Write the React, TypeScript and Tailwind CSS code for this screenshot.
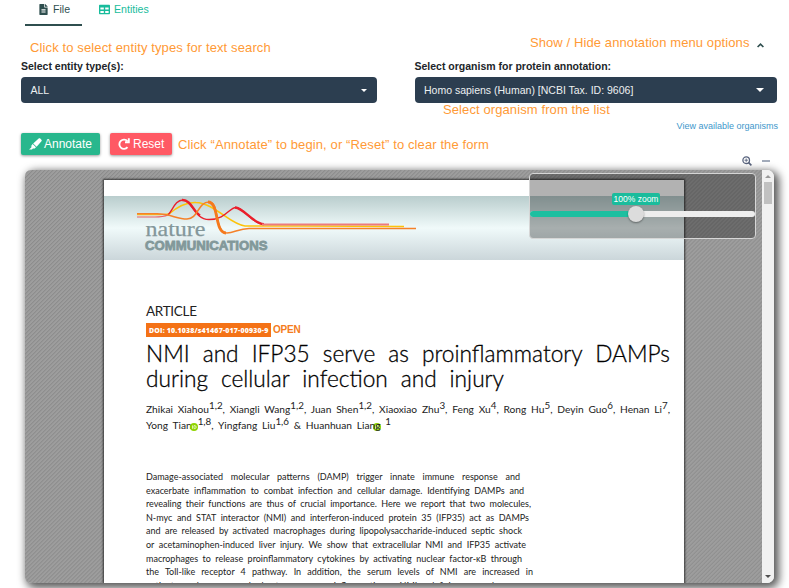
import React from 'react';

type Line = { text: string; width: number };

const abstractLines: Line[] = [
  { text: 'Damage-associated molecular patterns (DAMP) trigger innate immune response and', width: 374 },
  { text: 'exacerbate inflammation to combat infection and cellular damage. Identifying DAMPs and', width: 378 },
  { text: 'revealing their functions are thus of crucial importance. Here we report that two molecules,', width: 385 },
  { text: 'N-myc and STAT interactor (NMI) and interferon-induced protein 35 (IFP35) act as DAMPs', width: 383 },
  { text: 'and are released by activated macrophages during lipopolysaccharide-induced septic shock', width: 376 },
  { text: 'or acetaminophen-induced liver injury. We show that extracellular NMI and IFP35 activate', width: 380 },
  { text: 'macrophages to release proinflammatory cytokines by activating nuclear factor-κB through', width: 376 },
  { text: 'the Toll-like receptor 4 pathway. In addition, the serum levels of NMI are increased in', width: 387 },
  { text: 'patients who succumbed to severe inflammation. NMI deficiency reduces', width: 366 },
];

const paper = "font-['Lato','Noto_Sans',sans-serif]";

function Sup({ children }: { children: React.ReactNode }) {
  return <span className="relative -top-[4px] text-[9.8px] leading-none">{children}</span>;
}

function Orcid({ className = '' }: { className?: string }) {
  return (
    <svg viewBox="0 0 8 8" className={`absolute size-2 ${className}`}>
      <circle cx="4" cy="4" r="4" fill="#8fd400" />
      <path d="M2.500 2.400v3.400M4 2.600v3h.7c2 0 2-3 0-3z" stroke="#fff" strokeWidth=".7" fill="none" />
    </svg>
  );
}

function Select({ children, caret }: { children: React.ReactNode; caret: string }) {
  return (
    <div className="flex h-[26px] items-center justify-between rounded-[4px] bg-[#2c3e50] pl-[9.5px] text-[10.5px] text-[#ecf0f1]">
      <span className="pt-px">{children}</span>
      <span className={`size-0 border-x-transparent border-t-white ${caret}`} />
    </div>
  );
}

function Logo() {
  return (
    <svg viewBox="0 0 330 64" className="h-16 w-[330px]" fill="none">
      <path d="M33 18.700h17c6 0 12 0 15-1" stroke="#fdc21a" strokeWidth="1.300" />
      <path d="M33 21h18c6 0 10-.8 13-2" stroke="#e8606a" strokeWidth="1.200" />
      <path d="M65 18C73 11 82 6 92 6.500C110 7 127 29 141 30H200L300 30.500" stroke="#fdc30a" strokeWidth="1.600" />
      <path d="M64 19C69 14 71 4 79 4C88 4 90 23.500 105 23.500C122 23.500 125 11.500 132 11.500C139 11.500 149 28 158 28" stroke="#ea1f2b" strokeWidth="1.400" />
      <path d="M78 4C87 3.500 89 15 96 19.500M131 11.500C140 12 149 27.800 160 28.200" stroke="#ea1f2b" strokeWidth="2.300" />
      <path d="M158 28.600H285" stroke="#ec7b7c" strokeWidth="2" />
      <path d="M33 17.800H53C66 17.800 73 23 83 23C94 23 94 6 105 6C116 6 110 37 123 37C130 37 135 32.500 145 32.500H312" stroke="#f58129" strokeWidth="1.500" />
      <path d="M104 6C115.500 6 110 36.500 122 37" stroke="#f5791d" strokeWidth="2.800" />
      <text x="41.500" y="40" fill="#84979a" stroke="#84979a" strokeWidth=".25" fontFamily="Liberation Serif, serif" fontSize="21.500" textLength="60" lengthAdjust="spacingAndGlyphs">nature</text>
      <text x="41" y="53.500" fill="#82989a" stroke="#82989a" strokeWidth=".8" fontFamily="Liberation Sans, sans-serif" fontWeight="700" fontSize="13.300" textLength="122.500" lengthAdjust="spacingAndGlyphs">COMMUNICATIONS</text>
    </svg>
  );
}

function ZoomPanel() {
  return (
    <div className="absolute left-[504px] top-[3px] h-[66px] w-[227px] rounded-[4px] border border-[#d6d6d6] bg-black/30">
      <div className="ml-[82px] mt-[19px] h-3 w-[48px] rounded-[2px] bg-[#1abc9c] text-center text-[8.5px] leading-3 text-white">100% zoom</div>
      <div className="mt-[6px] flex h-[6px] w-[225px] items-center rounded-full bg-[#eee]">
        <div className="h-full w-[100px] rounded-l-full bg-[#1dbfa0]" />
        <div className="-ml-[2px] size-4 shrink-0 rounded-full bg-[#dcdcdc] shadow-[0_1px_2px_rgba(0,0,0,0.4)]" />
      </div>
    </div>
  );
}

export default function App() {
  return (
    <div className="h-[588px] w-[789px] overflow-hidden bg-white font-['Liberation_Sans',Arial,sans-serif] text-[#212529]">
      <nav className="ml-[25px] flex h-[26px] text-[10.6px] leading-[18px]">
        <div className="flex w-[57px] gap-[5px] border-b-2 border-[#2f4f4f] pl-[14px] text-[#2f4f4f]">
          <svg viewBox="0 0 384 512" className="mt-[4px] h-[11px] w-[9px]" fill="currentColor">
            <path d="M224 136V0H24C10 0 0 10 0 24v464c0 14 10 24 24 24h336c14 0 24-10 24-24V160H248c-14 0-24-10-24-24zm64 248c0 7-5 12-12 12H108c-7 0-12-5-12-12v-8c0-7 5-12 12-12h168c7 0 12 5 12 12v8zm0-64c0 7-5 12-12 12H108c-7 0-12-5-12-12v-8c0-7 5-12 12-12h168c7 0 12 5 12 12v8zm0-72v8c0 7-5 12-12 12H108c-7 0-12-5-12-12v-8c0-7 5-12 12-12h168c7 0 12 5 12 12zM384 122v6H256V0h6c7 0 13 3 17 7l98 98c4 4 7 11 7 17z" />
          </svg>
          <span>File</span>
        </div>
        <div className="ml-[17px] flex gap-[4px] text-[#18bc9c]">
          <svg viewBox="0 0 512 512" className="mt-[4px] size-[11px]" fill="currentColor">
            <path d="M464 32H48C21 32 0 53 0 80v352c0 27 21 48 48 48h416c27 0 48-21 48-48V80c0-27-21-48-48-48zM224 416H64v-96h160v96zm0-160H64v-96h160v96zm224 160H288v-96h160v96zm0-160H288v-96h160v96z" />
          </svg>
          <span>Entities</span>
        </div>
      </nav>

      <section className="ml-[21px] flex h-[107px] gap-[37.5px]">
        <div className="w-[356px] pt-[13px]">
          <p className="ml-[9px] h-[19px] whitespace-nowrap text-[13px] leading-[18px] tracking-[0.12px] text-[#ff9a36]">Click to select entity types for text search</p>
          <p className="h-[19px] text-[10.5px] font-bold leading-[16px]">Select entity type(s):</p>
          <Select caret="mr-[10px] border-x-[3px] border-t-[3px]">ALL</Select>
        </div>
        <div className="w-[362.5px] pt-[8px]">
          <div className="flex h-6 items-start justify-end gap-[7px] pr-[13.5px]">
            <p className="whitespace-nowrap text-[13px] leading-[18px] tracking-[0.1px] text-[#ff9a36]">Show / Hide annotation menu options</p>
            <svg viewBox="0 0 7 5" className="mt-[9px] h-[5px] w-[7px]" fill="none" stroke="#2f4f4f" strokeWidth="1.700">
              <path d="M.6 4L3.500 1.200L6.400 4" />
            </svg>
          </div>
          <p className="h-[19px] text-[10.5px] font-bold leading-[16px]">Select organism for protein annotation:</p>
          <Select caret="mr-[13px] border-x-[4px] border-t-[4px]">Homo sapiens (Human) [NCBI Tax. ID: 9606]</Select>
          <p className="-mt-px ml-[28.5px] h-4 whitespace-nowrap text-[13px] leading-[16px] tracking-[0.1px] text-[#ff9a36]">Select organism from the list</p>
          <p className="-mr-px whitespace-nowrap text-right text-[9px] leading-[16px] text-[#3e97cb]">View available organisms</p>
        </div>
      </section>

      <section className="ml-[21px] flex h-[22px] items-center text-white">
        <button className="flex h-[22px] w-[79px] items-center gap-[2px] rounded-[2px] bg-[#28b78d] pl-[8px] text-[12px] shadow-[0_1px_3px_rgba(0,0,0,0.4)]">
          <svg viewBox="0 0 14 14" className="size-[13px]" fill="currentColor">
            <path d="M4.500 5.800L10.400.6c.6-.5 1.200-.5 1.700 0l1.300 1.300c.5.500.5 1.100 0 1.700L8.200 9.500zM4 6.500l3.500 3.500-1.300 1.300-2-.1-1 1.200L0 12.500l2.500-2.300L2.600 8z" />
          </svg>
          <span>Annotate</span>
        </button>
        <button className="ml-[10px] flex h-[22px] w-[62px] items-center gap-[3px] rounded-[2px] bg-[#ff5964] pl-[8px] text-[12px] shadow-[0_1px_3px_rgba(0,0,0,0.4)]">
          <svg viewBox="0 0 12 12" className="size-[12px]" fill="none" stroke="currentColor" strokeWidth="1.900">
            <path d="M9.500 3.300A4.600 4.600 0 1 0 9.500 9.200" />
            <path d="M7 4.200H10.800V.3" />
          </svg>
          <span>Reset</span>
        </button>
        <p className="ml-[6px] whitespace-nowrap pt-px text-[13px] tracking-[0.11px] text-[#ff9a36]">Click “Annotate” to begin, or “Reset” to clear the form</p>
      </section>

      <div className="flex h-[15px] items-start gap-[10px] pl-[742px] pt-px">
        <svg viewBox="0 0 10 10" className="size-[10px]" fill="none" stroke="#59647e" strokeWidth="1.300">
          <circle cx="4.200" cy="4.200" r="3.300" />
          <path d="M6.600 6.600L9.400 9.400" strokeWidth="1.600" />
          <path d="M2.500 4.200H5.900M4.200 2.500V5.900" strokeWidth=".9" />
        </svg>
        <span className="mt-[4px] h-[2px] w-2 bg-[#a2abba]" />
      </div>

      <main className="relative ml-[25px] flex h-[413px] w-[749px] overflow-visible rounded-[7px] shadow-[3px_3px_9px_2px_rgba(0,0,0,0.65)]">
        <div className="h-full w-[737px] overflow-hidden rounded-l-[6px] bg-[#999] bg-[repeating-linear-gradient(135deg,#8b8b8b_0px,#9d9d9d_1px,#9d9d9d_2.2px,#8b8b8b_2.83px)] pl-[79px] pt-[10px]">
          <article className={`${paper} h-[403px] w-[579.5px] bg-white pt-4 text-[#222] shadow-[0_0_2px_1px_rgba(0,0,0,0.65)]`}>
            <header className="h-16 bg-linear-to-b from-[#b9cdcd] via-[#f0fafa] via-50% to-[#cbd6da]">
              <Logo />
            </header>
            <div className="ml-[42px]">
              <p className="mt-[42px] h-[21px] text-[13.5px] leading-[19px] tracking-[-0.3px]">ARTICLE</p>
              <div className="flex h-[14px] items-center">
                <span className="h-[14px] w-[125px] whitespace-nowrap bg-[#f47216] pl-[3px] font-['Open_Sans','Noto_Sans',sans-serif] text-[7px] font-extrabold leading-[15px] tracking-[0.16px] text-white">DOI: 10.1038/s41467-017-00930-9</span>
                <span className="ml-[2px] font-['Liberation_Sans',Arial,sans-serif] text-[10px] font-bold leading-[14px] tracking-[-0.2px] text-[#f47c20]">OPEN</span>
              </div>
              <h1 className="mt-[4px] text-[22.7px] font-light leading-[25px] text-black [-webkit-text-stroke:0.3px_black]">
                <span className="block w-[524px] whitespace-nowrap [text-align-last:justify]">NMI and IFP35 serve as proinflammatory DAMPs</span>
                <span className="block w-[358px] whitespace-nowrap [text-align-last:justify]">during cellular infection and injury</span>
              </h1>
              <div className="mt-[10px] text-[10.2px] leading-[16px]">
                <p className="h-4 w-[524px] whitespace-nowrap [text-align-last:justify]">
                  Zhikai Xiahou<Sup>1,2</Sup>, Xiangli Wang<Sup>1,2</Sup>, Juan Shen<Sup>1,2</Sup>, Xiaoxiao Zhu<Sup>3</Sup>, Feng Xu<Sup>4</Sup>, Rong Hu<Sup>5</Sup>, Deyin Guo<Sup>6</Sup>, Henan Li<Sup>7</Sup>,
                </p>
                <p className="h-4 w-[245px] whitespace-nowrap [text-align-last:justify]">
                  Yong <span className="relative">Tian<Orcid className="left-[18px] top-[4px]" /></span><span className="pl-[6px]"><Sup>1,8</Sup></span>, Yingfang Liu<Sup>1,6</Sup> &amp; Huanhuan <span className="relative"><Orcid className="left-[16px] top-[4px]" /><span className="relative">Liang</span></span> <Sup>1</Sup>
                </p>
              </div>
              <div className="mt-[37px] text-[9px] leading-[13.6px]">
                {abstractLines.map((line) => (
                  <p key={line.text} className="whitespace-nowrap [text-align-last:justify]" style={{ width: line.width }}>{line.text}</p>
                ))}
              </div>
            </div>
          </article>
        </div>
        <div className="flex w-3 flex-col items-center justify-between rounded-r-[7px] bg-[#f1f1f1] pb-[5px] pt-[5px]">
          <div className="flex flex-col items-center">
            <span className="size-0 border-x-[3px] border-b-[3px] border-x-transparent border-b-[#999]" />
            <span className="mt-[4px] h-[22px] w-2 bg-[#c1c1c1]" />
          </div>
          <span className="size-0 border-x-[3px] border-t-[3px] border-x-transparent border-t-[#505050]" />
        </div>
        <ZoomPanel />
      </main>
    </div>
  );
}
